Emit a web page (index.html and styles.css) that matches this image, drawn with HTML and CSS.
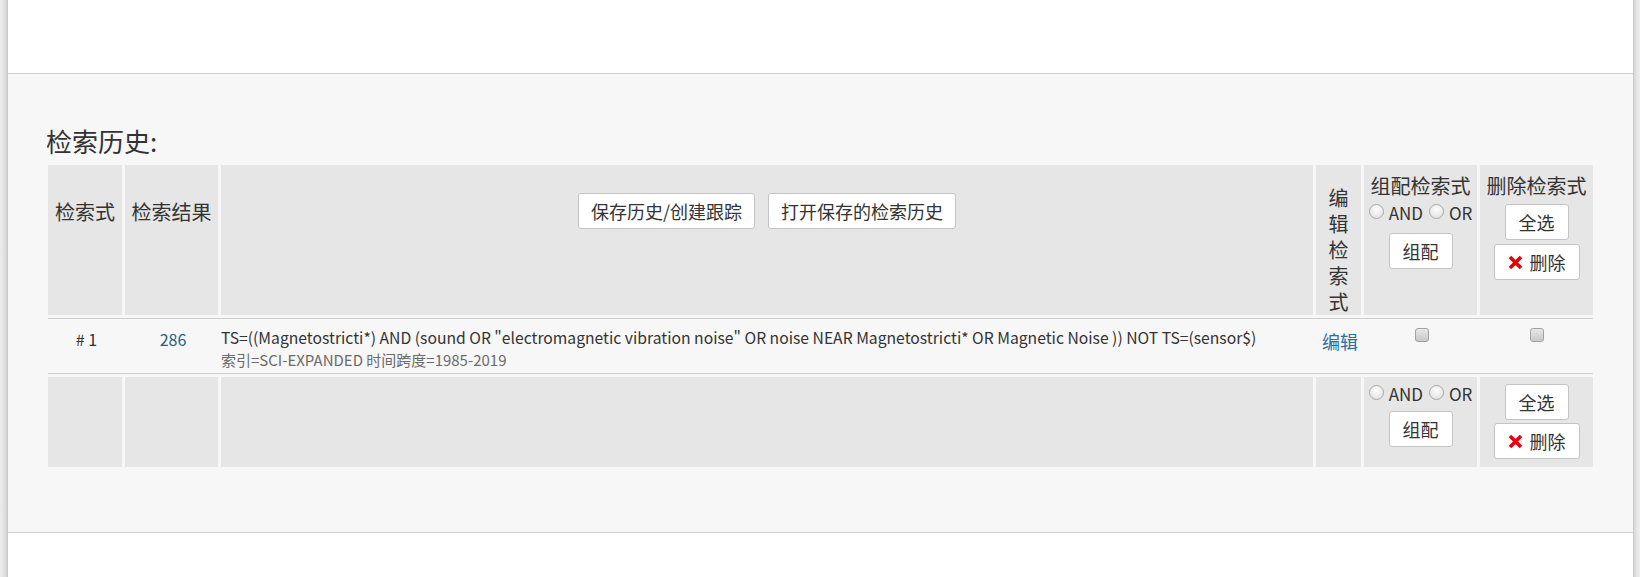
FILE: index.html
```html
<!DOCTYPE html>
<html lang="zh-CN">
<head>
<meta charset="utf-8">
<title>检索历史</title>
<link rel="stylesheet" href="styles.css">
</head>
<body>
<div class="edge edge-left"></div>
<div class="frame">
  <div class="topbar"></div>
  <section class="history">
    <h2 class="title">检索历史:</h2>
    <table class="hist">
      <colgroup>
        <col class="c1"><col class="c2"><col class="c3"><col class="c4"><col class="c5"><col class="c6">
      </colgroup>
      <thead>
        <tr>
          <th class="h-label">检索式</th>
          <th class="h-label">检索结果</th>
          <th class="h-actions">
            <div class="btn-row">
              <button class="btn">保存历史/创建跟踪</button>
              <button class="btn">打开保存的检索历史</button>
            </div>
          </th>
          <th class="h-edit">编辑检索式</th>
          <th class="h-combine">
            <div class="stack">
              <div class="h-text">组配检索式</div>
              <div class="radios">
                <label class="radio"><span class="rb"></span>AND</label>
                <label class="radio"><span class="rb"></span>OR</label>
              </div>
              <button class="btn btn-sm combine-btn">组配</button>
            </div>
          </th>
          <th class="h-delete">
            <div class="stack">
              <div class="h-text">删除检索式</div>
              <button class="btn btn-sm sel-btn">全选</button>
              <button class="btn btn-sm del-btn"><svg class="x" viewBox="0 0 15 15" width="15" height="15"><path d="M2 2 L13 13 M13 2 L2 13" stroke="#e8000b" stroke-width="3.6" stroke-linecap="butt"/></svg>删除</button>
            </div>
          </th>
        </tr>
      </thead>
      <tbody>
        <tr class="row">
          <td class="d-num"># 1</td>
          <td class="d-num"><a class="count">286</a></td>
          <td class="d-query">
            <div class="q-main">TS=((Magnetostricti*) AND (sound OR "electromagnetic vibration noise" OR noise NEAR Magnetostricti* OR Magnetic Noise )) NOT TS=(sensor$)</div>
            <div class="q-meta">索引=SCI-EXPANDED 时间跨度=1985-2019</div>
          </td>
          <td class="d-edit"><a class="edit">编辑</a></td>
          <td class="d-check"><span class="cb"></span></td>
          <td class="d-check"><span class="cb"></span></td>
        </tr>
      </tbody>
      <tfoot>
        <tr>
          <td></td>
          <td></td>
          <td></td>
          <td></td>
          <td class="f-combine">
            <div class="stack">
              <div class="radios">
                <label class="radio"><span class="rb"></span>AND</label>
                <label class="radio"><span class="rb"></span>OR</label>
              </div>
              <button class="btn btn-sm combine-btn">组配</button>
            </div>
          </td>
          <td class="f-delete">
            <div class="stack">
              <button class="btn btn-sm">全选</button>
              <button class="btn btn-sm del-btn"><svg class="x" viewBox="0 0 15 15" width="15" height="15"><path d="M2 2 L13 13 M13 2 L2 13" stroke="#e8000b" stroke-width="3.6" stroke-linecap="butt"/></svg>删除</button>
            </div>
          </td>
        </tr>
      </tfoot>
    </table>
  </section>
  <div class="bottom"></div>
</div>
<div class="edge edge-right"></div>
</body>
</html>
```
FILE: styles.css
```css
* { box-sizing: border-box; }
html, body { height: 100%; }
body {
  margin: 0;
  display: flex;
  background: #fff;
  font-family: "Noto Sans CJK SC", "Noto Sans", sans-serif;
  color: #333;
}
.edge { flex: 0 0 auto; }
.edge-left {
  width: 8px;
  background: linear-gradient(to right, #ececec, #dcdcdc 70%, #c4c4c4);
}
.edge-right {
  width: 7px;
  background: linear-gradient(to right, #c8c8c8, #e2e2e2 40%, #efefef);
}
.frame {
  flex: 1 1 auto;
  display: flex;
  flex-direction: column;
}
.topbar {
  height: 74px;
  border-bottom: 1px solid #cfcfcf;
  background: #fff;
}
.history {
  background: #f7f7f7;
  padding: 52px 40px 0;
  height: 459px;
  border-bottom: 1px solid #cfcfcf;
}
.bottom { flex: 1 1 auto; background: #fff; }
.title {
  margin: 0 0 9px -2px;
  font-size: 26px;
  line-height: 30px;
  font-weight: normal;
  color: #333;
}
.hist {
  width: 1545px;
  table-layout: fixed;
  border-collapse: separate;
  border-spacing: 0;
}
.c1 { width: 77px; }
.c2 { width: 96px; }
.c3 { width: 1095px; }
.c4 { width: 48px; }
.c5 { width: 116px; }
.c6 { width: 113px; }

.hist th {
  background: #e6e6e6;
  border-right: 3px solid #f7f7f7;
  border-bottom: 3px solid #f7f7f7;
  height: 152px;
  padding: 0;
  vertical-align: top;
  font-weight: normal;
  font-size: 20px;
  line-height: 28px;
  color: #333;
  text-align: center;
}
.hist th:last-child, .hist tfoot td:last-child { border-right: 0; }
.h-label { padding-top: 33px !important; }
.h-actions { padding-top: 28px !important; }
.h-edit { padding: 20px 10px 0 !important; line-height: 26px !important; }
.h-combine, .h-delete { padding-top: 7px !important; }

.btn-row {
  display: flex;
  justify-content: center;
  gap: 13px;
}
.btn {
  font-family: inherit;
  font-size: 18px;
  line-height: 24px;
  height: 36px;
  padding: 5px 12px;
  border: 1px solid #c4c4c4;
  border-radius: 3px;
  background: #fff;
  color: #333;
  display: inline-flex;
  align-items: center;
  justify-content: center;
}
.btn-sm { padding: 5px 13px; }
.stack {
  display: flex;
  flex-direction: column;
  align-items: center;
}
.h-text { line-height: 28px; }
.radios {
  display: flex;
  align-items: center;
  gap: 6px;
  height: 26px;
  font-size: 17px;
  line-height: 26px;
}
.radio { display: flex; align-items: center; gap: 5px; }
.rb {
  width: 15px;
  height: 15px;
  border-radius: 50%;
  border: 1px solid #a8a8a8;
  background: radial-gradient(circle at 50% 35%, #fdfdfd, #e2e2e2 85%);
  margin-bottom: 3px;
}
.combine-btn { margin-top: 7px; }
.sel-btn { margin-top: 4px; }
.del-btn { margin-top: 4px; }
.x { margin-right: 7px; margin-left: 0; }

.row td {
  border-top: 1px solid #cdcdcd;
  border-bottom: 1px solid #cdcdcd;
  height: 56px;
  padding: 0;
  vertical-align: top;
  font-size: 16px;
  line-height: 22px;
}
.d-num { text-align: center; padding-top: 9px !important; }
.count { color: #245f80; }
.d-query { padding-top: 8px !important; }
.q-main { font-size: 15.7px; line-height: 22px; color: #333; white-space: nowrap; }
.q-meta { font-size: 15px; line-height: 22px; color: #6b6b6b; }
.d-edit { text-align: center; padding-top: 9px !important; font-size: 18px !important; line-height: 26px !important; }
.edit { color: #26719f; }
.d-check { padding-top: 9px !important; }
.cb {
  display: block;
  margin: 0 auto;
  width: 14px;
  height: 14px;
  border: 1px solid #a2a2a2;
  border-radius: 3px;
  background: linear-gradient(#e8e8e8, #c8c8c8);
}

.hist tfoot td {
  background: #e6e6e6;
  border-right: 3px solid #f7f7f7;
  border-top: 3px solid #f7f7f7;
  height: 93px;
  padding: 0;
  vertical-align: top;
}
.f-combine { padding-top: 4px !important; }
.f-combine .combine-btn { margin-top: 4px; }
.f-delete { padding-top: 7px !important; }
.f-delete .del-btn { margin-top: 3px; }
```
